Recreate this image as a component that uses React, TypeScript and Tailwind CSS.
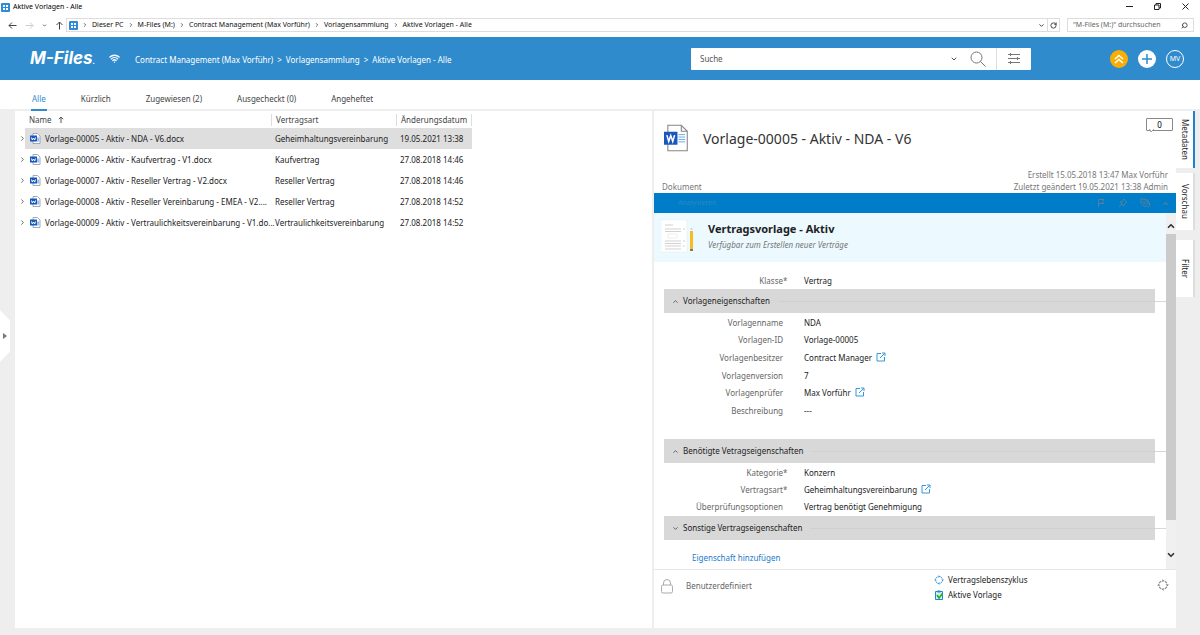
import type { ReactNode } from "react";
import { ChevronDown, ChevronRight, ChevronUp, RotateCw, Search, Wifi } from "lucide-react";

type Archivo = { nombre: string; tipo: string; fecha: string };
type Propiedad = { label: string; value: string; required?: boolean; link?: boolean };

const archivos: Archivo[] = [
  { nombre: "Vorlage-00005 - Aktiv - NDA - V6.docx", tipo: "Geheimhaltungsvereinbarung", fecha: "19.05.2021 13:38" },
  { nombre: "Vorlage-00006 - Aktiv - Kaufvertrag - V1.docx", tipo: "Kaufvertrag", fecha: "27.08.2018 14:46" },
  { nombre: "Vorlage-00007 - Aktiv - Reseller Vertrag - V2.docx", tipo: "Reseller Vertrag", fecha: "27.08.2018 14:46" },
  { nombre: "Vorlage-00008 - Aktiv - Reseller Vereinbarung - EMEA - V2....", tipo: "Reseller Vertrag", fecha: "27.08.2018 14:52" },
  { nombre: "Vorlage-00009 - Aktiv - Vertraulichkeitsvereinbarung - V1.do...", tipo: "Vertraulichkeitsvereinbarung", fecha: "27.08.2018 14:52" },
];

const vorlage: Propiedad[] = [
  { label: "Vorlagenname", value: "NDA" },
  { label: "Vorlagen-ID", value: "Vorlage-00005" },
  { label: "Vorlagenbesitzer", value: "Contract Manager", link: true },
  { label: "Vorlagenversion", value: "7" },
  { label: "Vorlagenprüfer", value: "Max Vorführ", link: true },
  { label: "Beschreibung", value: "---" },
];

const vertrag: Propiedad[] = [
  { label: "Kategorie", value: "Konzern", required: true },
  { label: "Vertragsart", value: "Geheimhaltungsvereinbarung", required: true, link: true },
  { label: "Überprüfungsoptionen", value: "Vertrag benötigt Genehmigung" },
];

const ruta = ["Dieser PC", "M-Files (M:)", "Contract Management (Max Vorführ)", "Vorlagensammlung", "Aktive Vorlagen - Alle"];
const tabs = ["Alle", "Kürzlich", "Zugewiesen (2)", "Ausgecheckt (0)", "Angeheftet"];

const VaultIcon = () => (
  <svg viewBox="0 0 9 9" className="size-[9px] shrink-0" aria-hidden="true">
    <rect width="9" height="9" rx="1" fill="#2f8ad8" />
    <path d="M2 2h2v2H2zM5 2h2v2H5zM2 5h2v2H2zM5 5h2v2H5z" fill="#fff" />
  </svg>
);

const WordIcon = ({ className }: { className: string }) => (
  <svg viewBox="0 0 26 28" className={className} aria-hidden="true">
    <path d="M4 .8h14l6.200 6.200v20.200H4z" fill="#fff" stroke="#858585" strokeWidth="1.100" />
    <path d="M18 .8V7h6.200" fill="none" stroke="#858585" strokeWidth="1.100" />
    <path d="M15 10.500h7M15 13h7M15 15.500h7M15 18h7" stroke="#6aa5e3" strokeWidth="1" />
    <rect y="7.500" width="14" height="13.500" fill="#1857bd" />
    <path d="M3 11l1.900 6.500L7 11.500l2.100 6L11 11" fill="none" stroke="#fff" strokeWidth="1.600" />
  </svg>
);

/* Version pequeña para las filas de la tabla */
const WordIconSmall = () => (
  <svg viewBox="0 0 11 11" className="size-[11px] shrink-0" aria-hidden="true">
    <path d="M3 .5h4.500L10 3v7.500H3z" fill="#fff" stroke="#8b95a3" strokeWidth=".8" />
    <path d="M7.200 4.500h2v4h-2z" fill="#8fc0f0" />
    <rect y="2.500" width="7" height="6" fill="#1857bd" />
    <path d="M1.500 4.500l.8 2.500 1.200-2 1.200 2 .8-2.500" fill="none" stroke="#fff" strokeWidth="1" />
  </svg>
);

const OpenIcon = () => (
  <svg viewBox="0 0 10 10" className="mb-[2px] size-[10px]" fill="none" stroke="#3497dc" aria-hidden="true">
    <path d="M5 1.500H1v7.500h7.500V5M4 6l4.500-4.500M6 1h3v3" />
  </svg>
);

const CycleIcon = ({ className }: { className: string }) => (
  <svg viewBox="0 0 12 12" className={className} fill="none" stroke="currentColor" aria-hidden="true">
    <path d="M2.200 4.200A4.300 4.300 0 0 1 4.200 2.200M7.800 2.200A4.300 4.300 0 0 1 9.800 4.200M9.800 7.800A4.300 4.300 0 0 1 7.800 9.800M4.200 9.800A4.300 4.300 0 0 1 2.200 7.800" strokeWidth="1.200" />
    <path d="M5.300.2L7.500 1.700l-2.200 1.500zM11.800 5.300L10.300 7.500 8.800 5.300zM6.700 11.800L4.500 10.300l2.200-1.500zM.2 6.700L1.700 4.500l1.500 2.200z" fill="currentColor" stroke="none" />
  </svg>
);

const TitleBar = () => (
  <div className="flex h-[18px] items-start justify-between pl-px pr-[10px]">
    <div className="flex items-center gap-[3px] pt-[2px]">
      <VaultIcon />
      <h1 className="text-[7px] leading-[10px] text-black">Aktive Vorlagen - Alle</h1>
    </div>
    <div className="flex items-center gap-[19px] pt-[2px]">
      <button aria-label="Minimieren">
        <svg viewBox="0 0 9 9" className="size-[9px]" stroke="#222" fill="none"><path d="M1 4.500h7" /></svg>
      </button>
      <button aria-label="Verkleinern">
        <svg viewBox="0 0 9 9" className="size-[9px]" stroke="#222" fill="none"><path d="M1.500 3h4.500v4.500H1.500zM3 3V1.500h4.500V6H6" /></svg>
      </button>
      <button aria-label="Schließen">
        <svg viewBox="0 0 9 9" className="size-[9px]" stroke="#222" fill="none"><path d="M1.500 1.500l6 6M7.500 1.500l-6 6" /></svg>
      </button>
    </div>
  </div>
);

const AddressBar = () => (
  <div className="flex h-[19px] items-start pl-2 pr-[6px]">
    <div className="flex h-[14px] w-[58px] items-center gap-[8px]">
      <button aria-label="Zurück">
        <svg viewBox="0 0 9 9" className="size-[9px]" stroke="#444" fill="none"><path d="M8.500 4.500H1M4 1.500l-3 3 3 3" /></svg>
      </button>
      <button aria-label="Vorwärts">
        <svg viewBox="0 0 9 9" className="size-[9px]" stroke="#ccc" fill="none"><path d="M.5 4.500H8M5 1.500l3 3-3 3" /></svg>
      </button>
      <button aria-label="Verlauf">
        <ChevronDown className="size-[5px] text-[#555]" strokeWidth={4} />
      </button>
      <button aria-label="Nach oben">
        <svg viewBox="0 0 9 9" className="size-[9px]" stroke="#444" fill="none"><path d="M4.500 8.500V1M1.500 4l3-3 3 3" /></svg>
      </button>
    </div>
    <div className="flex h-[14px] flex-1 items-center border border-[#ddd] pl-[2px]">
      <VaultIcon />
      <nav className="flex flex-1 items-center">
        {ruta.map((parte) => (
          <span key={parte} className="flex items-center">
            <ChevronRight className="mx-[4px] size-[6px] text-[#444]" strokeWidth={3} />
            <a href="#" className="text-[7px] leading-[12px] text-[#111]">{parte}</a>
          </span>
        ))}
      </nav>
      <button aria-label="Verlauf anzeigen" className="pr-[2px]">
        <ChevronDown className="size-[7px] text-[#333]" strokeWidth={3} />
      </button>
      <button aria-label="Aktualisieren" className="flex h-full items-center border-l border-[#ddd] px-[2px]">
        <RotateCw className="size-[7px] text-[#333]" strokeWidth={3} />
      </button>
    </div>
    <label className="ml-[7px] flex h-[14px] w-[127px] items-center border border-[#ddd] pl-[5px] pr-[5px]">
      <input aria-label="M-Files durchsuchen" placeholder={'"M-Files (M:)" durchsuchen'} className="min-w-0 flex-1 text-[7px] leading-[12px] outline-none placeholder:text-[#666]" />
      <Search className="size-[7px] -scale-x-100 text-[#444]" strokeWidth={3} />
    </label>
  </div>
);

const Header = () => (
  <header className="flex h-[43px] items-center bg-[#308bcc] text-white">
    <div className="flex min-w-0 flex-1 items-center pl-[30px]">
      <div className="w-[79px] whitespace-nowrap pt-[2px] font-[Inter,sans-serif] text-[17px] font-bold italic leading-[24px]">
        M-Files<span className="text-[8px]">.</span>
      </div>
      <Wifi className="size-[11px]" strokeWidth={3} />
      <nav className="ml-[15px] flex gap-[4px] whitespace-nowrap pt-[3px] text-[8px] leading-[12px]">
        <a href="#">Contract Management (Max Vorführ)</a>
        <span>&gt;</span>
        <a href="#">Vorlagensammlung</a>
        <span>&gt;</span>
        <a href="#">Aktive Vorlagen - Alle</a>
      </nav>
    </div>
    <form className="flex h-[22px] w-[340px] items-center rounded-[1px] bg-white">
      <input aria-label="Suche" placeholder="Suche" className="min-w-0 flex-1 pl-[9px] text-[8px] leading-[12px] outline-none placeholder:text-[#555]" />
      <button type="button" aria-label="Suchoptionen">
        <ChevronDown className="size-[8px] text-[#555]" strokeWidth={3} />
      </button>
      <button type="button" aria-label="Suchen" className="ml-[12px] mr-[10px]">
        <svg viewBox="0 0 16 16" className="size-[16px]" fill="none" stroke="#777"><circle cx="6.500" cy="6.500" r="5.500" /><path d="M10.500 10.500l5 5" /></svg>
      </button>
      <button type="button" aria-label="Filter" className="flex h-full w-[35px] items-center justify-center border-l border-[#ddd]">
        <svg viewBox="0 0 12 12" className="size-[12px]" stroke="#777" fill="none">
          <path d="M0 1.500h12M0 5.500h12M0 9.500h12" />
          <path d="M2.500 0v3M9.500 4v3M2.500 8v3" />
        </svg>
      </button>
    </form>
    <div className="flex w-[169px] justify-end gap-[10px] pr-[16px]">
      <button aria-label="Aktivitäten">
        <svg viewBox="0 0 18 18" className="size-[18px]">
          <circle cx="9" cy="9" r="9" fill="#f9ae06" />
          <path d="M5 9l4-3.500L13 9M5 13l4-3.500 4 3.500" fill="none" stroke="#fff" strokeWidth="1.600" />
        </svg>
      </button>
      <button aria-label="Erstellen">
        <svg viewBox="0 0 18 18" className="size-[18px]">
          <circle cx="9" cy="9" r="9" fill="#fff" />
          <path d="M9 4v10M4 9h10" stroke="#308bcc" strokeWidth="1.500" />
        </svg>
      </button>
      <button className="flex size-[18px] items-center justify-center rounded-full border border-white text-[7px] leading-[8px]">MV</button>
    </div>
  </header>
);

const Tabs = () => (
  <nav className="flex h-[31px] gap-[33px] border-b-2 border-[#eee] pl-[31px] text-[8px] leading-[12px] text-[#444]">
    {tabs.map((tab, i) => (
      <a key={tab} href="#" className={i === 0 ? "-mb-[2px] border-b-2 border-[#308bcc] px-[1px] pt-[13px] text-[#308bcc]" : "px-[1px] pt-[13px]"}>
        {tab}
      </a>
    ))}
  </nav>
);

const TablaArchivos = () => (
  <section className="min-w-0 flex-1 bg-white">
    <table className="w-[457px] table-fixed text-[8px] leading-[12px] text-[#222]">
      <colgroup>
        <col className="w-[10px]" />
        <col className="w-[246px]" />
        <col className="w-[125px]" />
        <col className="w-[76px]" />
      </colgroup>
      <thead>
        <tr className="h-[17px] text-left text-[#444]">
          <td></td>
          <th className="pl-[4px] font-normal">
            <span className="flex items-center gap-[6px]">
              Name
              <svg viewBox="0 0 6 7" className="h-[7px] w-[6px]" stroke="#555" fill="none" aria-hidden="true"><path d="M3 7V1M.8 3.200L3 1l2.200 2.200" /></svg>
            </span>
          </th>
          <th className="font-normal"><span className="block border-l border-[#ddd] pl-[4px]">Vertragsart</span></th>
          <th className="font-normal"><span className="block whitespace-nowrap border-x border-[#ddd] pl-[4px]">Änderungsdatum</span></th>
        </tr>
      </thead>
      <tbody>
        {archivos.map((archivo, i) => (
          <tr key={archivo.nombre} className="h-[21px]">
            <td className="pl-[4px]">
              <button aria-label="Erweitern" className="block"><ChevronRight className="size-[7px] text-[#555]" strokeWidth={3} /></button>
            </td>
            <td className={i === 0 ? "bg-[#dedede] pl-[5px]" : "pl-[5px]"}>
              <span className="flex items-center gap-[4px] whitespace-nowrap">
                <WordIconSmall />
                {archivo.nombre}
              </span>
            </td>
            <td className={i === 0 ? "whitespace-nowrap bg-[#dedede] pl-[4px]" : "whitespace-nowrap pl-[4px]"}>{archivo.tipo}</td>
            <td className={i === 0 ? "whitespace-nowrap bg-[#dedede] pl-[4px]" : "whitespace-nowrap pl-[4px]"}>{archivo.fecha}</td>
          </tr>
        ))}
      </tbody>
    </table>
  </section>
);

const Fila = ({ dato }: { dato: Propiedad }) => (
  <div className="grid grid-cols-[129px_21px_1fr] items-center text-[8px] leading-[12px]">
    <dt className="text-right text-[#666]">{dato.label}</dt>
    <span className="text-[#666]">{dato.required ? "*" : ""}</span>
    <dd className="flex items-center gap-[4px] text-[#222]">
      {dato.value}
      {dato.link && <a href="#" aria-label={`${dato.value} öffnen`}><OpenIcon /></a>}
    </dd>
  </div>
);

const Grupo = ({ title, open, children }: { title: string; open: boolean; children?: ReactNode }) => (
  <section>
    <div className="flex items-center pl-[10px]">
      <button className="flex h-[24px] flex-1 items-center gap-[4px] bg-[#d8d8d8] pl-[8px] text-left text-[8px] leading-[12px] text-[#222]">
        {open ? <ChevronUp className="size-[7px] text-[#555]" strokeWidth={3} /> : <ChevronDown className="size-[7px] text-[#555]" strokeWidth={3} />}
        {title}
        <span className="ml-[4px] h-px flex-1 bg-[#d0d0d0]" />
      </button>
      <span className="h-px w-[11px] bg-[#d8d8d8]" />
    </div>
    {children}
  </section>
);

const Ficha = () => (
  <section className="flex w-[522px] shrink-0 flex-col bg-white">
    <div className="flex h-[54px] items-center justify-between pl-[10px] pr-[3px]">
      <div className="flex items-center gap-[14px]">
        <WordIcon className="h-[28px] w-[25px]" />
        <h2 className="pt-[2px] text-[14px] leading-[20px] text-[#333]">Vorlage-00005 - Aktiv - NDA - V6</h2>
      </div>
      <button aria-label="Kommentare" className="relative mb-[28px] h-[13px] w-[27px] rounded-[1px] border border-[#888] text-[8px] leading-[11px]">
        0
        <svg viewBox="0 0 6 4" className="absolute left-[2px] top-[10px] h-[4px] w-[6px]" aria-hidden="true"><path d="M.5 0L2 3l3-3" fill="#fff" stroke="#888" strokeWidth=".8" /></svg>
      </button>
    </div>
    <div className="flex h-[28px] items-end justify-between pl-[8px] pr-[8px] text-[8px] leading-[12px] text-[#777]">
      <span>Dokument</span>
      <p className="text-right">
        Erstellt 15.05.2018 13:47 Max Vorführ
        <br />
        Zuletzt geändert 19.05.2021 13:38 Admin
      </p>
    </div>
    <div className="flex h-[20px] items-center justify-between bg-[#007dc9] pl-[24px] pr-[7px] text-[#5a7f9b]">
      <button className="text-[7px] leading-[10px] text-[#2e88bf]">Analysieren</button>
      <div className="flex items-center gap-[12px]">
        <button aria-label="Markieren">
          <svg viewBox="0 0 10 10" className="size-[10px]" fill="none" stroke="currentColor"><path d="M2.500 9V1.500H8L6.500 3.500 8 5.500H2.500" /></svg>
        </button>
        <button aria-label="Anheften">
          <svg viewBox="0 0 10 10" className="size-[10px]" fill="none" stroke="currentColor"><path d="M1 9l3-3M2 4l4 4 .5-2.500L9 4 6 1 4.500 3.500z" /></svg>
        </button>
        <button aria-label="Beziehungen">
          <svg viewBox="0 0 10 10" className="size-[10px]" fill="none" stroke="currentColor"><path d="M.8 1h4l4 4.200L5 9 .8 5zM5 1.500h2l2.500 3V8L7.500 9.500M2.500 3.500l3 3M4 2.800l2.800 2.800" /></svg>
        </button>
        <button aria-label="Einklappen"><ChevronUp className="size-[7px]" strokeWidth={4} /></button>
      </div>
    </div>
    <div className="flex">
      <div className="min-w-0 flex-1">
        <div className="flex h-[49px] items-start gap-[14px] bg-[#ecf9fe] pl-[7px] pt-[6px]">
          <svg viewBox="0 0 33 34" className="h-[34px] w-[33px]" aria-hidden="true">
            <path d="M0 1h26v32H0z" fill="#fff" stroke="#e8eef0" strokeWidth=".6" />
            <path d="M4 6h8M4 10h16M4 12.500h16M4 22h16M4 24.500h16M4 27h16M4 30h16M22 10h2M22 22h2M22 27h2" stroke="#ccc" strokeWidth=".9" />
            <path d="M7 15h9v4H7z" fill="none" stroke="#eee" />
            <path d="M29 12h3v18h-3z" fill="#f4bd26" />
            <path d="M29 30h3v2h-3z" fill="#8a7a50" />
            <path d="M29.500 10h2" stroke="#bbb" />
          </svg>
          <div>
            <h3 className="text-[11px] font-bold leading-[20px] text-[#222]">Vertragsvorlage - Aktiv</h3>
            <p className="text-[8px] italic leading-[12px] text-[#777]">Verfügbar zum Erstellen neuer Verträge</p>
          </div>
        </div>
        <dl className="pb-[2px] pt-[13px]">
          <Fila dato={{ label: "Klasse", value: "Vertrag", required: true }} />
        </dl>
        <Grupo title="Vorlageneigenschaften" open>
          <dl className="mb-[19px] grid h-[107px] auto-rows-fr pt-[1px]">
            {vorlage.map((dato) => <Fila key={dato.label} dato={dato} />)}
          </dl>
        </Grupo>
        <Grupo title="Benötigte Vetragseigenschaften" open>
          <dl className="grid h-[53px] auto-rows-fr pt-[1px]">
            {vertrag.map((dato) => <Fila key={dato.label} dato={dato} />)}
          </dl>
        </Grupo>
        <Grupo title="Sonstige Vertragseigenschaften" open={false} />
        <div className="h-[29px] pl-[38px] pt-[12px]">
          <button className="block text-[8px] leading-[12px] text-[#1a7bcb]">Eigenschaft hinzufügen</button>
        </div>
      </div>
      <div className="flex w-[10px] flex-col items-center bg-[#f0f0f0]">
        <button aria-label="Nach oben blättern" className="flex h-[21px] items-center pt-[5px]"><ChevronUp className="size-[10px] text-[#333]" strokeWidth={4} /></button>
        <div className="w-full flex-1 bg-[#cbcbcb]" />
        <button aria-label="Nach unten blättern" className="flex h-[49px] items-end pb-[9px]"><ChevronDown className="size-[10px] text-[#333]" strokeWidth={4} /></button>
      </div>
    </div>
    <footer className="flex flex-1 items-start border-t border-[#e6e6e6] pl-[7px] pr-[7px] text-[8px]">
      <svg viewBox="0 0 12 15" className="mt-[9px] h-[15px] w-[12px]" fill="none" stroke="#aaa" aria-hidden="true">
        <rect x=".5" y="6" width="11" height="8" rx="1.500" />
        <path d="M2.500 6V4a3.500 3.500 0 0 1 7 0v2" />
      </svg>
      <span className="ml-[13px] mt-[10px] flex-1 leading-[12px] text-[#666]">Benutzerdefiniert</span>
      <div className="w-[223px] pt-[2px] leading-[15px] text-[#222]">
        <div className="flex items-center gap-[4px]">
          <CycleIcon className="size-[10px] text-[#1f86d0]" />
          Vertragslebenszyklus
        </div>
        <div className="flex items-center gap-[4px]">
          <svg viewBox="0 0 10 10" className="size-[10px]" aria-hidden="true">
            <path d="M1.500 1.500h7v8h-7z" fill="#d9efff" stroke="#2786c9" />
            <path d="M3.500.5h3v2h-3z" fill="#2786c9" />
            <path d="M3 5l2 3 3.500-4.500" fill="none" stroke="#23b52c" strokeWidth="1.800" />
          </svg>
          Aktive Vorlage
        </div>
      </div>
      <button aria-label="Workflow ändern" className="mt-[9px]"><CycleIcon className="size-[12px] text-[#888]" /></button>
    </footer>
  </section>
);

const PanelTabs = () => (
  <div className="flex w-[24px] shrink-0 flex-col text-[8px] leading-[12px] text-[#222]">
    <button className="flex h-[57px] w-[19px] items-center justify-center border-r-2 border-[#1c81cf] bg-white [writing-mode:vertical-rl]">Metadaten</button>
    <button className="mt-[5px] flex h-[57px] w-[19px] items-center justify-center border-r-2 border-[#ddd] bg-white [writing-mode:vertical-rl]">Vorschau</button>
    <button className="mt-[10px] flex h-[57px] w-[19px] items-center justify-center border-r-2 border-[#ddd] bg-white [writing-mode:vertical-rl]">Filter</button>
  </div>
);

const App = () => {
  return (
    <div className="flex min-h-screen flex-col bg-white font-['Noto_Sans','Open_Sans',sans-serif]">
      <TitleBar />
      <AddressBar />
      <Header />
      <Tabs />
      <main className="flex flex-1 bg-[#eee] pb-[7px]">
        <div className="flex w-[15px] shrink-0 flex-col pt-[199px]">
          <button aria-label="Navigation einblenden" className="flex h-[52px] w-[10px] items-center justify-center bg-white [clip-path:polygon(0_0,100%_20%,100%_80%,0_100%)]">
            <svg viewBox="0 0 4 6" className="h-[6px] w-[4px]"><path d="M0 0l4 3-4 3z" fill="#777" /></svg>
          </button>
        </div>
        <TablaArchivos />
        <div className="w-[2px] shrink-0" />
        <Ficha />
        <PanelTabs />
      </main>
    </div>
  );
};

export default App;
